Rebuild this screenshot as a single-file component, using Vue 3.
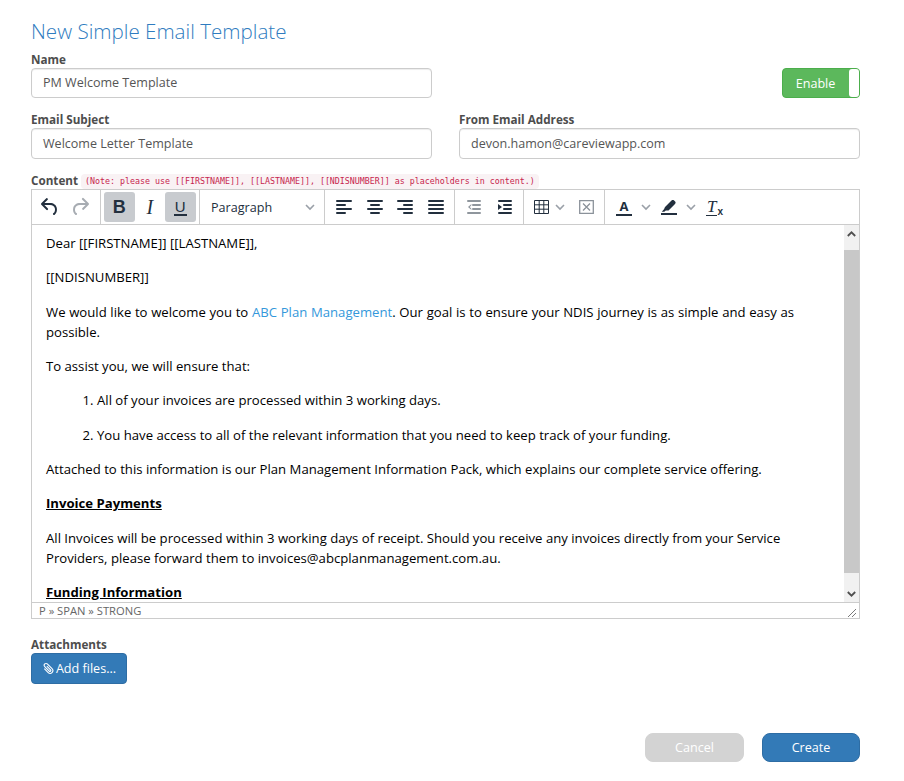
<script setup>
const chevron = 'M2 1 L6 5 L10 1'
</script>

<template>
  <main class="page">
    <h1 class="title">New Simple Email Template</h1>

    <section class="row first">
      <div class="field">
        <label class="label">Name</label>
        <div class="input">PM Welcome Template</div>
      </div>
      <div class="toggle">
        <span class="toggle-text">Enable</span>
        <span class="knob"></span>
      </div>
    </section>

    <section class="row second">
      <div class="field">
        <label class="label">Email Subject</label>
        <div class="input tall">Welcome Letter Template</div>
      </div>
      <div class="field">
        <label class="label">From Email Address</label>
        <div class="input tall">devon.hamon@careviewapp.com</div>
      </div>
    </section>

    <div class="content-label">
      <label class="label inline">Content</label>
      <code class="note">(Note: please use [[FIRSTNAME]], [[LASTNAME]], [[NDISNUMBER]] as placeholders in content.)</code>
    </div>

    <section class="editor">
      <div class="toolbar">
        <div class="group g-history">
          <button class="tb">
            <svg width="24" height="24" viewBox="0 0 24 24"><path fill="#222f3e" d="M6.4 8H12c3.7 0 6.2 2 6.8 5.1.6 2.7-.4 5.6-2.3 6.8a1 1 0 0 1-1-1.8c1.1-.6 1.8-2.7 1.4-4.6-.5-2.1-2.1-3.5-4.9-3.5H6.4l3.3 3.3a1 1 0 1 1-1.4 1.4l-5-5a1 1 0 0 1 0-1.4l5-5a1 1 0 0 1 1.4 1.4L6.4 8z"/></svg>
          </button>
          <button class="tb">
            <svg width="24" height="24" viewBox="0 0 24 24"><path fill="#222f3e" fill-opacity=".4" d="M17.6 10H12c-2.8 0-4.4 1.4-4.9 3.5-.4 2 .3 4 1.4 4.6a1 1 0 1 1-1 1.8c-2-1.2-2.9-4.1-2.3-6.8.6-3 3-5.1 6.8-5.1h5.6l-3.3-3.3a1 1 0 1 1 1.4-1.4l5 5a1 1 0 0 1 0 1.4l-5 5a1 1 0 0 1-1.4-1.4l3.3-3.3z"/></svg>
          </button>
        </div>
        <div class="group g-format">
          <button class="tb on"><span class="glyph-b">B</span></button>
          <button class="tb"><span class="glyph-i">I</span></button>
          <button class="tb on"><span class="glyph-u">U</span></button>
        </div>
        <div class="group g-para">
          <span class="para">Paragraph</span>
          <svg class="chev" width="12" height="7" viewBox="0 0 12 7"><path :d="chevron" fill="none" stroke="#9aa0a8" stroke-width="1.6"/></svg>
        </div>
        <div class="group g-align">
          <button class="tb"><svg width="24" height="24" viewBox="0 0 24 24"><path fill="#222f3e" d="M5 5h14a1 1 0 0 1 0 2H5a1 1 0 1 1 0-2zm0 4h8a1 1 0 0 1 0 2H5a1 1 0 1 1 0-2zm0 8h8a1 1 0 0 1 0 2H5a1 1 0 0 1 0-2zm0-4h14a1 1 0 0 1 0 2H5a1 1 0 0 1 0-2z"/></svg></button>
          <button class="tb"><svg width="24" height="24" viewBox="0 0 24 24"><path fill="#222f3e" d="M5 5h14a1 1 0 0 1 0 2H5a1 1 0 1 1 0-2zm3 4h8a1 1 0 0 1 0 2H8a1 1 0 1 1 0-2zm0 8h8a1 1 0 0 1 0 2H8a1 1 0 0 1 0-2zm-3-4h14a1 1 0 0 1 0 2H5a1 1 0 0 1 0-2z"/></svg></button>
          <button class="tb"><svg width="24" height="24" viewBox="0 0 24 24"><path fill="#222f3e" d="M5 5h14a1 1 0 0 1 0 2H5a1 1 0 1 1 0-2zm6 4h8a1 1 0 0 1 0 2h-8a1 1 0 0 1 0-2zm0 8h8a1 1 0 0 1 0 2h-8a1 1 0 0 1 0-2zm-6-4h14a1 1 0 0 1 0 2H5a1 1 0 0 1 0-2z"/></svg></button>
          <button class="tb"><svg width="24" height="24" viewBox="0 0 24 24"><path fill="#222f3e" d="M5 5h14a1 1 0 0 1 0 2H5a1 1 0 1 1 0-2zm0 4h14a1 1 0 0 1 0 2H5a1 1 0 1 1 0-2zm0 4h14a1 1 0 0 1 0 2H5a1 1 0 0 1 0-2zm0 4h14a1 1 0 0 1 0 2H5a1 1 0 0 1 0-2z"/></svg></button>
        </div>
        <div class="group g-indent">
          <button class="tb"><svg width="24" height="24" viewBox="0 0 24 24" opacity=".5"><path fill="#222f3e" d="M7 5h12a1 1 0 0 1 0 2H7a1 1 0 1 1 0-2zm5 4h7a1 1 0 0 1 0 2h-7a1 1 0 0 1 0-2zm0 4h7a1 1 0 0 1 0 2h-7a1 1 0 0 1 0-2zm-5 4h12a1 1 0 0 1 0 2H7a1 1 0 0 1 0-2zm3.4-8L7 12l3.4 3v-1.2L8.8 12l1.6-1.8z"/></svg></button>
          <button class="tb"><svg width="24" height="24" viewBox="0 0 24 24"><path fill="#222f3e" d="M7 5h12a1 1 0 0 1 0 2H7a1 1 0 1 1 0-2zm5 4h7a1 1 0 0 1 0 2h-7a1 1 0 0 1 0-2zm0 4h7a1 1 0 0 1 0 2h-7a1 1 0 0 1 0-2zm-5 4h12a1 1 0 0 1 0 2H7a1 1 0 0 1 0-2zM6 9l4 3-4 3z"/></svg></button>
        </div>
        <div class="group g-table">
          <svg width="15" height="14" viewBox="0 0 15 14"><path fill="none" stroke="#222f3e" stroke-width="1" d="M.5.5h14v13H.5zM.5 4.800h14M.5 9.200h14M5.200.5v13M9.800.5v13"/></svg>
          <svg class="chev2" width="12" height="7" viewBox="0 0 12 7"><path :d="chevron" fill="none" stroke="#9aa0a8" stroke-width="1.6"/></svg>
          <svg class="tdel" width="15" height="14" viewBox="0 0 15 14"><path fill="none" stroke="#8b929a" stroke-width="1.300" d="M.7.7h13.600v12.600H.7zM4 3.500l7 7M11 3.500l-7 7"/></svg>
        </div>
        <div class="group g-color">
          <span class="color-icon"><span class="glyph-a">A</span><span class="bar"></span></span>
          <svg class="chev3" width="12" height="7" viewBox="0 0 12 7"><path :d="chevron" fill="none" stroke="#9aa0a8" stroke-width="1.6"/></svg>
          <svg class="pen" width="16" height="15" viewBox="0 0 16 15"><path fill="#222f3e" d="M0 13h16v2H0zM4 7 10.500 .5c.8-.8 1.900-.8 2.600-.1l1 1c.7.700.7 1.800-.1 2.600L7.500 10.500H4.800L3.300 11.700H.8L3 9.300z"/></svg>
          <svg class="chev4" width="12" height="7" viewBox="0 0 12 7"><path :d="chevron" fill="none" stroke="#9aa0a8" stroke-width="1.6"/></svg>
          <span class="clear"><span class="glyph-t">T</span><span class="glyph-x">x</span></span>
        </div>
      </div>

      <div class="body">
        <article class="doc">
          <p>Dear [[FIRSTNAME]] [[LASTNAME]],</p>
          <p>[[NDISNUMBER]]</p>
          <p class="wide">We would like to welcome you to <span class="link">ABC Plan Management</span>. Our goal is to ensure your NDIS journey is as simple and easy as possible.</p>
          <p>To assist you, we will ensure that:</p>
          <ol>
            <li>All of your invoices are processed within 3 working days.</li>
            <li>You have access to all of the relevant information that you need to keep track of your funding.</li>
          </ol>
          <p>Attached to this information is our Plan Management Information Pack, which explains our complete service offering.</p>
          <p><strong>Invoice Payments</strong></p>
          <p>All Invoices will be processed within 3 working days of receipt. Should you receive any invoices directly from your Service Providers, please forward them to invoices@abcplanmanagement.com.au.</p>
          <p><strong>Funding Information</strong></p>
        </article>
        <div class="scrollbar">
          <span class="sb-btn"><svg width="9" height="6" viewBox="0 0 9 6"><path d="M.8 5 4.500 1.300 8.200 5" fill="none" stroke="#505050" stroke-width="1.800"/></svg></span>
          <span class="sb-thumb"></span>
          <span class="sb-btn"><svg width="9" height="6" viewBox="0 0 9 6"><path d="M.8 1 4.500 4.700 8.200 1" fill="none" stroke="#505050" stroke-width="1.800"/></svg></span>
        </div>
      </div>

      <div class="status">
        <span>P » SPAN » STRONG</span>
        <svg width="8" height="8" viewBox="0 0 8 8"><path d="M0 8 8 0M4 8 8 4" stroke="#7a7a7a" stroke-width="1" fill="none"/></svg>
      </div>
    </section>

    <section class="attach">
      <label class="label compact">Attachments</label>
      <button class="add">
        <svg width="12" height="13" viewBox="0 0 12 13"><path transform="rotate(-45 6 6.500)" d="M3.300 4v5.500a2.700 2.700 0 0 0 5.400 0V2.800a1.800 1.800 0 0 0-3.600 0v6.400a.9.9 0 0 0 1.800 0V4" fill="none" stroke="#fff" stroke-width="1.100"/></svg>
        <span>Add files...</span>
      </button>
    </section>

    <footer class="actions">
      <button class="btn cancel">Cancel</button>
      <button class="btn create">Create</button>
    </footer>
  </main>
</template>

<style>
html, body { margin: 0; background: #fff; }
</style>

<style scoped>
.page {
  box-sizing: border-box;
  width: 904px;
  height: 781px;
  padding: 18px 44px 0 31px;
  font-family: "Open Sans", sans-serif;
  font-size: 12.600px;
  color: #333;
  overflow: hidden;
}
.title {
  margin: 0;
  font-size: 20.600px;
  line-height: 26px;
  font-weight: 300;
  color: #2f7cc0;
}
.row { display: flex; }
.first { margin-top: 8px; justify-content: space-between; align-items: flex-end; }
.second { margin-top: 14px; gap: 27px; }
.field { width: 401px; }
.label {
  display: block;
  font-size: 11.700px;
  line-height: 14px;
  padding-bottom: 2px;
  font-weight: 700;
  color: #4d4d4d;
}
.label.compact { line-height: 14px; padding-bottom: 2px; }
.input {
  box-sizing: border-box;
  height: 30px;
  padding: 0 11px;
  border: 1px solid #ccc;
  border-radius: 4px;
  box-shadow: inset 0 1px 1px rgba(0,0,0,.075);
  font-size: 12.550px;
  line-height: 28px;
  color: #555;
}
.input.tall { height: 31px; line-height: 29px; }
.toggle {
  box-sizing: border-box;
  position: relative;
  width: 78px;
  height: 30px;
  padding: 1px 11px 0 0;
  border: 1px solid #4cae4c;
  border-radius: 4px;
  background: #5cb85c;
  color: #fff;
  text-align: center;
  line-height: 27px;
}
.toggle-text { font-size: 12.600px; }
.knob {
  position: absolute;
  top: 0;
  right: 0;
  width: 10px;
  height: 28px;
  background: #fff;
  border-radius: 3px;
}
.content-label {
  margin-top: 13px;
  height: 17px;
  display: flex;
  align-items: center;
  gap: 3px;
}
.note {
  font-family: "DejaVu Sans Mono", monospace;
  font-size: 8.300px;
  line-height: 15px;
  padding: 0 4px;
  margin-top: 2px;
  color: #c7254e;
  background: #f9f2f4;
  border-radius: 4px;
}
.editor {
  box-sizing: border-box;
  border: 1px solid #ccc;
  width: 829px;
}
.toolbar {
  display: flex;
  height: 34px;
  border-bottom: 1px solid #ccc;
}
.group {
  box-sizing: border-box;
  display: flex;
  align-items: center;
  border-right: 1px solid #ccc;
  flex: none;
}
.g-history { width: 69px; padding-left: 2.500px; }
.g-format { width: 99px; padding-left: 3px; }
.g-para { width: 125px; padding-left: 11px; justify-content: space-between; padding-right: 8px; }
.g-align { width: 130px; padding-left: 4px; }
.g-indent { width: 69px; padding-left: 3px; }
.g-table { width: 81px; padding-left: 10px; }
.g-color { border-right: 0; flex: 1; padding-left: 7px; }
.tb {
  flex: none;
  width: 30.500px;
  height: 30px;
  padding: 0;
  border: 0;
  background: none;
  border-radius: 3px;
  display: flex;
  align-items: center;
  justify-content: center;
  font-family: inherit;
  color: #222f3e;
}
.tb.on { background: #c8cbcf; }
.glyph-b { font: 700 18px/1 "Liberation Sans", sans-serif; }
.glyph-i { font: italic 400 20px/1 "Liberation Serif", serif; }
.glyph-u {
  font: 400 15px/15px "Liberation Sans", sans-serif;
  border-bottom: 2px solid #222f3e;
  padding: 0 1px;
  height: 15px;
}
.para { font-size: 12.600px; color: #222f3e; }
.chev2 { margin-left: 5px; }
.tdel { margin-left: 13px; }
.color-icon {
  width: 16px;
  display: flex;
  flex-direction: column;
  align-items: center;
  margin-left: 4px;
}
.glyph-a { font: 700 13px/14px "Open Sans", sans-serif; color: #222f3e; }
.bar { width: 16px; height: 2px; background: #222f3e; margin-top: 1px; }
.chev3 { margin-left: 8px; }
.pen { margin-left: 9px; }
.chev4 { margin-left: 8px; }
.clear { margin-left: 9px; display: flex; align-items: flex-end; height: 18px; }
.glyph-t {
  font: italic 400 17px/16px "Liberation Serif", serif;
  color: #222f3e;
  padding: 0 1px;
  border-bottom: 1.500px solid #222f3e;
}
.glyph-x {
  font: 700 10px/9px "Liberation Sans", sans-serif;
  color: #222f3e;
}
.body {
  display: flex;
  height: 377px;
  border-bottom: 1px solid #ccc;
  overflow: hidden;
}
.doc {
  flex: 1;
  min-width: 0;
  padding: 0 14px;
  color: #000;
  font-size: 13.150px;
  line-height: 20px;
  box-sizing: border-box;
}
.doc p { margin: 8px 0 14.330px; }
.doc p + p { margin-top: 0; }
.doc p.wide { word-spacing: .25px; }
.doc ol { margin: 0; padding-left: 51px; }
.doc li { margin: 0 0 14.330px; }
.doc strong { text-decoration: underline; font-weight: 700; }
.link { color: #3498db; }
.scrollbar {
  flex: none;
  width: 15px;
  background: #f1f1f1;
  display: flex;
  flex-direction: column;
}
.sb-btn {
  height: 17px;
  flex: none;
  display: flex;
  align-items: center;
  justify-content: center;
}
.sb-thumb { flex: 1; background: #c8c8c8; margin-top: 8px; margin-bottom: 12px; }
.status {
  box-sizing: border-box;
  height: 15px;
  padding: 0 3px 1px 7px;
  display: flex;
  align-items: center;
  justify-content: space-between;
  font-size: 11.200px;
  color: #666;
}
.status svg { align-self: flex-end; }
.attach { margin-top: 18px; }
.add {
  box-sizing: border-box;
  width: 96px;
  height: 31px;
  padding: 0;
  display: flex;
  align-items: center;
  justify-content: center;
  gap: 2px;
  border: 1px solid #2e6da4;
  border-radius: 4px;
  background: #337ab7;
  color: #fff;
  font-family: inherit;
  font-size: 12.600px;
}
.actions {
  margin-top: 49px;
  display: flex;
  justify-content: flex-end;
  gap: 18px;
}
.btn {
  box-sizing: border-box;
  height: 29px;
  border-radius: 8px;
  font-family: inherit;
  font-size: 12.600px;
  color: #fff;
  padding: 0;
}
.cancel { width: 99px; background: #d3d3d3; border: 1px solid #d3d3d3; }
.create { width: 98px; background: #337ab7; border: 1px solid #2e6da4; }
</style>
